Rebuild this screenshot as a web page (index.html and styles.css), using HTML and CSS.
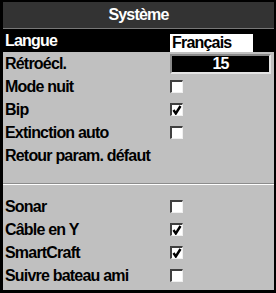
FILE: index.html
```html
<!DOCTYPE html>
<html lang="fr">
  <head>
    <meta charset="UTF-8" />
    <meta name="viewport" content="width=device-width, initial-scale=1.0" />
    <title>Système</title>
    <link rel="stylesheet" href="styles.css">
  </head>
  <body>
    <div class="panel">
      <div class="title">Système</div>
      <div class="list">
        <div class="row selected">
          <span class="label">Langue</span>
          <span class="value-box">Français</span>
        </div>
        <div class="row">
          <span class="label">Rétroécl.</span>
          <span class="level-box">15</span>
        </div>
        <div class="row">
          <span class="label">Mode nuit</span>
          <span class="check"></span>
        </div>
        <div class="row">
          <span class="label">Bip</span>
          <span class="check checked"><svg viewBox="0 0 10 10"><path d="M1.5 5 L3.8 8.5 L8.5 1" /></svg></span>
        </div>
        <div class="row">
          <span class="label">Extinction auto</span>
          <span class="check"></span>
        </div>
        <div class="row">
          <span class="label wide">Retour param. défaut</span>
        </div>
      </div>
      <div class="separator"></div>
      <div class="list">
        <div class="row">
          <span class="label">Sonar</span>
          <span class="check"></span>
        </div>
        <div class="row">
          <span class="label">Câble en Y</span>
          <span class="check checked"><svg viewBox="0 0 10 10"><path d="M1.5 5 L3.8 8.5 L8.5 1" /></svg></span>
        </div>
        <div class="row">
          <span class="label">SmartCraft</span>
          <span class="check checked"><svg viewBox="0 0 10 10"><path d="M1.5 5 L3.8 8.5 L8.5 1" /></svg></span>
        </div>
        <div class="row">
          <span class="label">Suivre bateau ami</span>
          <span class="check"></span>
        </div>
      </div>
    </div>
  </body>
</html>
```

FILE: styles.css
```css
body {
  margin: 0;
  background-color: #000;
  font-family: "Liberation Sans", Arial, sans-serif;
  font-weight: bold;
}
.panel {
  width: 271px;
  height: 288px;
  margin: 2px 2px 3px 3px;
  background-color: #c0c0c0;
  display: flex;
  flex-direction: column;
}
.title {
  height: 26px;
  line-height: 26px;
  background-color: #333;
  color: #fff;
  text-align: center;
  font-size: 16px;
  letter-spacing: -0.8px;
  border-bottom: 1px solid #777;
}
.list {
  display: flex;
  flex-direction: column;
}
.list:first-of-type {
  margin-top: 1px;
}
.row {
  height: 23px;
  display: flex;
  align-items: center;
  padding-left: 2px;
  font-size: 16px;
  letter-spacing: -0.8px;
  color: #000;
}
.row.selected {
  background-color: #000;
  color: #fff;
}
.label {
  width: 165px;
  flex: none;
  white-space: nowrap;
}
.label.wide {
  width: auto;
}
.value-box {
  width: 81px;
  height: 18px;
  margin-top: 4px;
  padding-left: 2px;
  line-height: 18px;
  background-color: #fff;
  color: #000;
}
.level-box {
  width: 97px;
  height: 16px;
  line-height: 16px;
  background-color: #000;
  color: #fff;
  text-align: center;
  border: 2px solid;
  border-color: #8a8a8a #e4e4e4 #e4e4e4 #8a8a8a;
}
.check {
  width: 10px;
  height: 10px;
  background-color: #fff;
  border-style: solid;
  border-width: 2px 1px 1px 2px;
  border-color: #404040 #f0f0f0 #f0f0f0 #404040;
  display: flex;
}
.check svg {
  width: 10px;
  height: 10px;
}
.check path {
  fill: none;
  stroke: #000;
  stroke-width: 2.4;
}
.separator {
  height: 0;
  margin: 16px 0 10px;
  border-top: 1px solid #8c8c8c;
  border-bottom: 1px solid #fff;
}
```
